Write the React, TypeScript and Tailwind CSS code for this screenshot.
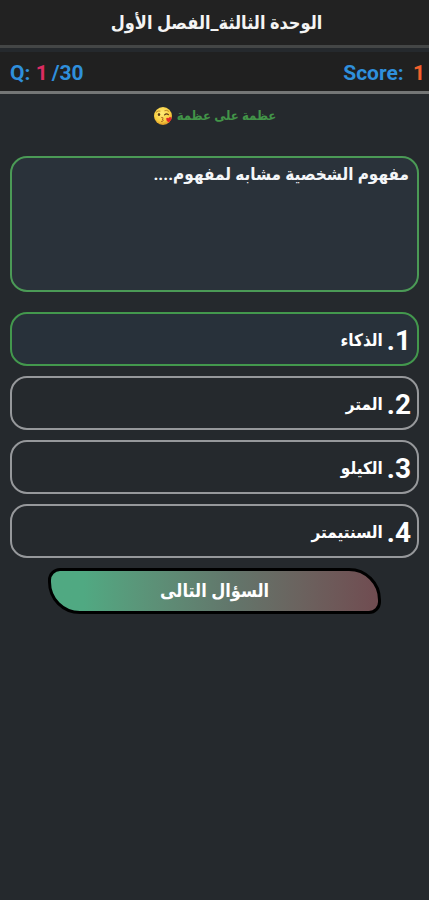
import { useState } from "react";

const FONT = "font-['Roboto','DejaVu_Sans_Condensed','DejaVu_Sans',sans-serif]";

const answers = ["الذكاء", "المتر", "الكيلو", "السنتيمتر"];

function WinkingKiss() {
  return (
    <svg viewBox="0 0 20 20" className="size-5 shrink-0" aria-hidden="true">
      <defs>
        <radialGradient id="face" cx="0.45" cy="0.35" r="0.65">
          <stop offset="0" stopColor="#ffec78" />
          <stop offset="0.7" stopColor="#f8cd3e" />
          <stop offset="1" stopColor="#dc9626" />
        </radialGradient>
      </defs>
      <circle cx="10" cy="10" r="9" fill="url(#face)" />
      <path d="M3.2 6.2Q5 4.2 7 5M11.8 4.6Q14 3.6 15.6 5.2" fill="none" stroke="#b98224" strokeWidth="0.9" strokeLinecap="round" />
      <ellipse cx="6" cy="8.4" rx="1.2" ry="1.5" fill="#5c3a14" />
      <path d="M11.6 8.8Q13.4 7 15.4 8.6" fill="none" stroke="#5c3a14" strokeWidth="1.2" strokeLinecap="round" />
      <path d="M8.6 11.4Q11 11.4 10 12.8Q9.6 13.2 9 13.3Q11 13.6 10 15Q9.4 15.7 8.4 15.5" fill="none" stroke="#a86420" strokeWidth="0.9" strokeLinecap="round" />
      <path d="M15.6 16.6Q12.8 14.4 13.2 12.6Q13.8 11 15.5 12.3Q16.6 10.4 18.2 11.5Q19.6 13.2 15.6 16.6Z" fill="#e3262b" />
    </svg>
  );
}

export default function App() {
  const [selected, setSelected] = useState(0);

  return (
    <div className={`flex min-h-screen flex-col bg-[#25292d] text-white ${FONT}`}>
      <header className="flex h-12 items-center justify-center border-b-3 border-[#444646] bg-[#222222] pl-1">
        <h1 dir="rtl" className="text-lg font-bold text-[#f4f4f4]">
          الوحدة الثالثة_الفصل الأول
        </h1>
      </header>

      <div className="mt-1 flex h-[42px] items-center justify-between border-b-3 border-[#747676] bg-[#202020] pt-1 pr-1 pl-[10px] text-[21px] font-bold text-[#2f8fdc]">
        <p>
          Q: <span className="text-[#dc2c62]">1</span>
          <span className="pl-1">/30</span>
        </p>
        <p>
          Score: <span className="pl-1 text-[#f4602c]">1</span>
        </p>
      </div>

      <p dir="rtl" className="mt-2 flex h-7 items-center justify-center gap-1 text-[13px] font-bold text-[#429448]">
        <span>عظمة على عظمة</span>
        <WinkingKiss />
      </p>

      <main className="flex flex-col px-[10px] pt-[26px]">
        <section dir="rtl" className="h-[136px] rounded-[17px] border-2 border-[#4b9a56] bg-[#2a323a] px-2 pt-[2px]">
          <h2 className="text-[17px] leading-7 font-bold text-[#f4f6f8]">مفهوم الشخصية مشابه لمفهوم....</h2>
        </section>

        <div className="mt-5 flex flex-col gap-[10px]">
          {answers.map((answer, i) => (
            <button
              key={answer}
              type="button"
              dir="rtl"
              aria-pressed={selected === i}
              onClick={() => setSelected(i)}
              className={`flex h-[54px] items-center gap-1 rounded-[17px] border-2 px-[6px] pt-1 font-bold ${
                selected === i ? "border-[#43984d] bg-[#28313a]" : "border-[#96989b]"
              }`}
            >
              <span dir="ltr" className="flex flex-row-reverse text-[28px]">
                <span>{i + 1}</span>
                <span>.</span>
              </span>
              <span className="text-[17px]">{answer}</span>
            </button>
          ))}
        </div>

        <button
          type="button"
          className="mx-[38px] mt-[10px] h-[46px] rounded-tl-[12px] rounded-tr-[32px] rounded-br-[12px] rounded-bl-[32px] border-[3px] border-black bg-linear-to-r from-[#50a982] from-10% via-[#62766b] via-55% to-[#704c51] text-lg font-bold"
        >
          السؤال التالى
        </button>
      </main>
    </div>
  );
}
